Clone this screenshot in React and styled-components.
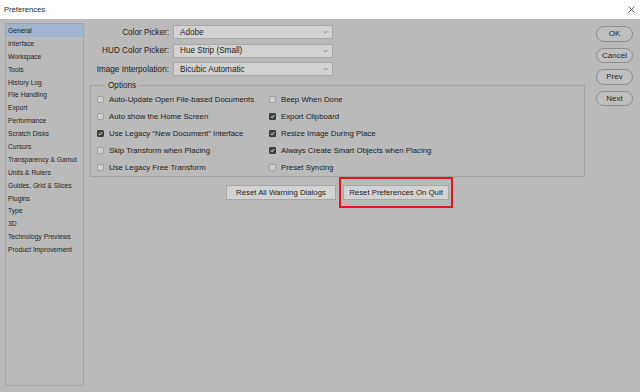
import React from "react";
import styled, { createGlobalStyle } from "styled-components";

const Global = createGlobalStyle`
  html, body { margin: 0; padding: 0; }
  body {
    width: 640px; height: 392px; overflow: hidden;
    background: #bababa;
    font-family: "Liberation Sans", Arial, sans-serif;
    color: #222;
  }
`;

const Window = styled.div`
  width: 640px; height: 392px;
  display: flex; flex-direction: column;
  background: #bababa;
`;

const TitleBar = styled.div`
  height: 19px; flex: none;
  background: #ffffff;
  display: flex; align-items: center; justify-content: space-between;
  padding: 0 5px 0 4px;
`;

const Title = styled.span`
  font-size: 7.6px; color: #262626;
`;

const Close = styled.svg`
  width: 7px; height: 7px; display: block;
`;

const Body = styled.div`
  flex: 1;
  display: flex;
  padding: 4px 7px 6px 5px;
  min-height: 0;
`;

const Sidebar = styled.div`
  width: 79px; flex: none;
  border: 1px solid #a4a4a4;
  box-sizing: border-box;
  display: flex; flex-direction: column;
`;

const NavItem = styled.div`
  height: 12.9px;
  flex: none;
  display: flex; align-items: center;
  padding-left: 2px;
  font-size: 6.7px;
  color: #1e1e1e;
  background: ${(p) => (p.$active ? "#9fb5cf" : "transparent")};
`;

const Content = styled.div`
  width: 495px; flex: none;
  margin-left: 6px;
  display: flex; flex-direction: column;
`;

const FormRows = styled.div`
  display: flex; flex-direction: column; gap: 4.5px;
  padding-top: 2px;
`;

const FormRow = styled.div`
  display: flex; align-items: center;
  height: 14px;
`;

const Label = styled.label`
  width: 79px; text-align: right;
  font-size: 8.2px; color: #222;
  margin-right: 4px;
  white-space: nowrap;
`;

const Select = styled.div`
  width: 160px; height: 14px;
  box-sizing: border-box;
  border: 1px solid #a8a8a8;
  background: #d2d2d2;
  display: flex; align-items: center; justify-content: space-between;
  padding: 0 4px 0 6px;
  font-size: 8.2px; color: #1e1e1e;
`;

const Chevron = styled.svg`
  width: 5px; height: 4px; display: block;
`;

const Fieldset = styled.fieldset`
  margin: 4px 0 0 0;
  padding: 0 0 0 6px;
  border: 1px solid #a2a2a2;
  box-sizing: border-box;
`;

const Legend = styled.legend`
  margin-left: 8px;
  padding: 0 3px;
  font-size: 8.2px; color: #222;
  line-height: 11px;
`;

const Grid = styled.div`
  display: grid;
  grid-template-columns: 172px 1fr;
  grid-auto-flow: column;
  grid-template-rows: repeat(5, 17px);
`;

const Option = styled.div`
  display: flex; align-items: center;
  font-size: 7.8px; color: #202020;
  white-space: nowrap;
`;

const Box = styled.span`
  width: 7px; height: 7px;
  box-sizing: border-box;
  border: 1px solid ${(p) => (p.$checked ? "#3c3c3c" : "#a0a0a0")};
  background: ${(p) => (p.$checked ? "#444444" : "#d0d0d0")};
  border-radius: 1px;
  margin-right: 5px;
  display: flex; align-items: center; justify-content: center;
  flex: none;
`;

const ButtonRow = styled.div`
  display: flex; align-items: center; justify-content: center;
  gap: 3px;
  padding-left: 4px;
`;

const Button = styled.button`
  height: 15px;
  box-sizing: border-box;
  border: 1px solid #a6a6a6;
  background: #d3d3d3;
  font-family: "Liberation Sans", Arial, sans-serif;
  font-size: 7.8px; color: #222;
  padding: 0;
  width: ${(p) => p.$w}px;
  border-radius: 0;
`;

const Highlight = styled.div`
  border: 2px solid #e8141c;
  padding: 6px 2px;
  display: flex;
`;

const Side = styled.div`
  flex: none;
  margin-left: 11px;
  display: flex; flex-direction: column; gap: 6px;
  padding-top: 3px;
`;

const Pill = styled.button`
  width: 37px; height: 15.5px;
  box-sizing: border-box;
  border: 1px solid #8c8c8c;
  border-radius: 8px;
  background: #bfbfbf;
  font-family: "Liberation Sans", Arial, sans-serif;
  font-size: 8px; color: #262626;
  padding: 0;
`;

const nav = [
  "General", "Interface", "Workspace", "Tools", "History Log", "File Handling",
  "Export", "Performance", "Scratch Disks", "Cursors", "Transparency & Gamut",
  "Units & Rulers", "Guides, Grid & Slices", "Plugins", "Type", "3D",
  "Technology Previews", "Product Improvement",
];

const options = [
  ["Auto-Update Open File-based Documents", false],
  ["Auto show the Home Screen", false],
  ["Use Legacy \u201CNew Document\u201D Interface", true],
  ["Skip Transform when Placing", false],
  ["Use Legacy Free Transform", false],
  ["Beep When Done", false],
  ["Export Clipboard", true],
  ["Resize Image During Place", true],
  ["Always Create Smart Objects when Placing", true],
  ["Preset Syncing", false],
];

const selects = [
  ["Color Picker:", "Adobe"],
  ["HUD Color Picker:", "Hue Strip (Small)"],
  ["Image Interpolation:", "Bicubic Automatic"],
];

export default function App() {
  return (
    <Window>
      <Global />
      <TitleBar>
        <Title>Preferences</Title>
        <Close viewBox="0 0 7 7">
          <path d="M0.5 0.5L6.5 6.5M6.5 0.5L0.5 6.5" stroke="#333" strokeWidth="0.8" />
        </Close>
      </TitleBar>
      <Body>
        <Sidebar>
          {nav.map((n, i) => (
            <NavItem key={n} $active={i === 0}>{n}</NavItem>
          ))}
        </Sidebar>
        <Content>
          <FormRows>
            {selects.map(([l, v]) => (
              <FormRow key={l}>
                <Label>{l}</Label>
                <Select>
                  <span>{v}</span>
                  <Chevron viewBox="0 0 5 4">
                    <path d="M0.5 1L2.5 3L4.5 1" fill="none" stroke="#777" strokeWidth="0.8" />
                  </Chevron>
                </Select>
              </FormRow>
            ))}
          </FormRows>
          <Fieldset>
            <Legend>Options</Legend>
            <Grid>
              {options.map(([t, c]) => (
                <Option key={t}>
                  <Box $checked={c}>
                    {c && (
                      <svg width="5" height="5" viewBox="0 0 5 5">
                        <path d="M0.8 2.6L2 3.8L4.2 1.2" fill="none" stroke="#fff" strokeWidth="0.9" />
                      </svg>
                    )}
                  </Box>
                  {t}
                </Option>
              ))}
            </Grid>
          </Fieldset>
          <ButtonRow>
            <Button $w={110}>Reset All Warning Dialogs</Button>
            <Highlight>
              <Button $w={106}>Reset Preferences On Quit</Button>
            </Highlight>
          </ButtonRow>
        </Content>
        <Side>
          <Pill>OK</Pill>
          <Pill>Cancel</Pill>
          <Pill>Prev</Pill>
          <Pill>Next</Pill>
        </Side>
      </Body>
    </Window>
  );
}
